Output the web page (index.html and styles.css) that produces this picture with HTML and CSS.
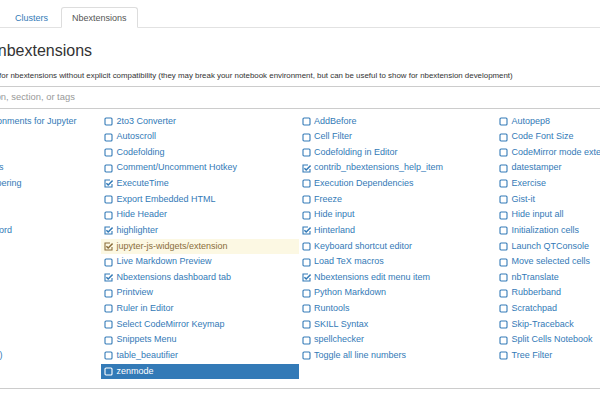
FILE: index.html
```html
<!DOCTYPE html>
<html>
<head>
<meta charset="utf-8">
<link rel="stylesheet" href="styles.css">
</head>
<body>
<div class="page">
  <ul class="tabs">
    <li class="tab"><a>Files</a></li>
    <li class="tab"><a>Running</a></li>
    <li class="tab"><a>Clusters</a></li>
    <li class="tab active"><a>Nbextensions</a></li>
  </ul>
  <h1 class="title">Configurable nbextensions</h1>
  <label class="compat"><input type="checkbox" class="compat-box">disable configuration for nbextensions without explicit compatibility (they may break your notebook environment, but can be useful to show for nbextension development)</label>
  <input class="filter" type="text" placeholder="filter: by description, section, or tags">
  <div class="list">
    <ul class="col">
      <li class="item"><svg class="ico" viewBox="0 0 9 9"><rect x="1" y="1" width="7" height="7" rx="1"/></svg><span>(some) LaTeX environments for Jupyter</span></li>
      <li class="item"><svg class="ico" viewBox="0 0 9 9"><rect x="1" y="1" width="7" height="7" rx="1"/></svg><span>Autosave time</span></li>
      <li class="item"><svg class="ico" viewBox="0 0 9 9"><rect x="1" y="1" width="7" height="7" rx="1"/></svg><span>Code prettify</span></li>
      <li class="item"><svg class="ico" viewBox="0 0 9 9"><rect x="1" y="1" width="7" height="7" rx="1"/></svg><span>Collapsible Headings</span></li>
      <li class="item"><svg class="ico" viewBox="0 0 9 9"><path d="M8 5V8H1V1H6"/><path class="chk" d="M2.4 4.2L4.2 6L8.6 1.6"/></svg><span>Equation Auto Numbering</span></li>
      <li class="item"><svg class="ico" viewBox="0 0 9 9"><rect x="1" y="1" width="7" height="7" rx="1"/></svg><span>Help panel</span></li>
      <li class="item"><svg class="ico" viewBox="0 0 9 9"><rect x="1" y="1" width="7" height="7" rx="1"/></svg><span>Hide CodeCell</span></li>
      <li class="item"><svg class="ico" viewBox="0 0 9 9"><rect x="1" y="1" width="7" height="7" rx="1"/></svg><span>Highlight selected word</span></li>
      <li class="item"><svg class="ico" viewBox="0 0 9 9"><rect x="1" y="1" width="7" height="7" rx="1"/></svg><span>Limit Output</span></li>
      <li class="item"><svg class="ico" viewBox="0 0 9 9"><rect x="1" y="1" width="7" height="7" rx="1"/></svg><span>Notify</span></li>
      <li class="item"><svg class="ico" viewBox="0 0 9 9"><rect x="1" y="1" width="7" height="7" rx="1"/></svg><span>Scroll Down</span></li>
      <li class="item"><svg class="ico" viewBox="0 0 9 9"><rect x="1" y="1" width="7" height="7" rx="1"/></svg><span>RISE</span></li>
      <li class="item"><svg class="ico" viewBox="0 0 9 9"><rect x="1" y="1" width="7" height="7" rx="1"/></svg><span>Snippets</span></li>
      <li class="item"><svg class="ico" viewBox="0 0 9 9"><rect x="1" y="1" width="7" height="7" rx="1"/></svg><span>Split Cells</span></li>
      <li class="item"><svg class="ico" viewBox="0 0 9 9"><rect x="1" y="1" width="7" height="7" rx="1"/></svg><span>Variable Inspector</span></li>
      <li class="item"><svg class="ico" viewBox="0 0 9 9"><rect x="1" y="1" width="7" height="7" rx="1"/></svg><span>Table of Contents (2)</span></li>
    </ul>
    <ul class="col">
      <li class="item"><svg class="ico" viewBox="0 0 9 9"><rect x="1" y="1" width="7" height="7" rx="1"/></svg><span>2to3 Converter</span></li>
      <li class="item"><svg class="ico" viewBox="0 0 9 9"><rect x="1" y="1" width="7" height="7" rx="1"/></svg><span>Autoscroll</span></li>
      <li class="item"><svg class="ico" viewBox="0 0 9 9"><rect x="1" y="1" width="7" height="7" rx="1"/></svg><span>Codefolding</span></li>
      <li class="item"><svg class="ico" viewBox="0 0 9 9"><rect x="1" y="1" width="7" height="7" rx="1"/></svg><span>Comment/Uncomment Hotkey</span></li>
      <li class="item"><svg class="ico" viewBox="0 0 9 9"><path d="M8 5V8H1V1H6"/><path class="chk" d="M2.4 4.2L4.2 6L8.6 1.6"/></svg><span>ExecuteTime</span></li>
      <li class="item"><svg class="ico" viewBox="0 0 9 9"><rect x="1" y="1" width="7" height="7" rx="1"/></svg><span>Export Embedded HTML</span></li>
      <li class="item"><svg class="ico" viewBox="0 0 9 9"><rect x="1" y="1" width="7" height="7" rx="1"/></svg><span>Hide Header</span></li>
      <li class="item"><svg class="ico" viewBox="0 0 9 9"><path d="M8 5V8H1V1H6"/><path class="chk" d="M2.4 4.2L4.2 6L8.6 1.6"/></svg><span>highlighter</span></li>
      <li class="item warn"><svg class="ico" viewBox="0 0 9 9"><path d="M8 5V8H1V1H6"/><path class="chk" d="M2.4 4.2L4.2 6L8.6 1.6"/></svg><span>jupyter-js-widgets/extension</span></li>
      <li class="item"><svg class="ico" viewBox="0 0 9 9"><rect x="1" y="1" width="7" height="7" rx="1"/></svg><span>Live Markdown Preview</span></li>
      <li class="item"><svg class="ico" viewBox="0 0 9 9"><path d="M8 5V8H1V1H6"/><path class="chk" d="M2.4 4.2L4.2 6L8.6 1.6"/></svg><span>Nbextensions dashboard tab</span></li>
      <li class="item"><svg class="ico" viewBox="0 0 9 9"><rect x="1" y="1" width="7" height="7" rx="1"/></svg><span>Printview</span></li>
      <li class="item"><svg class="ico" viewBox="0 0 9 9"><rect x="1" y="1" width="7" height="7" rx="1"/></svg><span>Ruler in Editor</span></li>
      <li class="item"><svg class="ico" viewBox="0 0 9 9"><rect x="1" y="1" width="7" height="7" rx="1"/></svg><span>Select CodeMirror Keymap</span></li>
      <li class="item"><svg class="ico" viewBox="0 0 9 9"><rect x="1" y="1" width="7" height="7" rx="1"/></svg><span>Snippets Menu</span></li>
      <li class="item"><svg class="ico" viewBox="0 0 9 9"><rect x="1" y="1" width="7" height="7" rx="1"/></svg><span>table_beautifier</span></li>
      <li class="item active"><svg class="ico" viewBox="0 0 9 9"><rect x="1" y="1" width="7" height="7" rx="1"/></svg><span>zenmode</span></li>
    </ul>
    <ul class="col">
      <li class="item"><svg class="ico" viewBox="0 0 9 9"><rect x="1" y="1" width="7" height="7" rx="1"/></svg><span>AddBefore</span></li>
      <li class="item"><svg class="ico" viewBox="0 0 9 9"><rect x="1" y="1" width="7" height="7" rx="1"/></svg><span>Cell Filter</span></li>
      <li class="item"><svg class="ico" viewBox="0 0 9 9"><rect x="1" y="1" width="7" height="7" rx="1"/></svg><span>Codefolding in Editor</span></li>
      <li class="item"><svg class="ico" viewBox="0 0 9 9"><path d="M8 5V8H1V1H6"/><path class="chk" d="M2.4 4.2L4.2 6L8.6 1.6"/></svg><span>contrib_nbextensions_help_item</span></li>
      <li class="item"><svg class="ico" viewBox="0 0 9 9"><rect x="1" y="1" width="7" height="7" rx="1"/></svg><span>Execution Dependencies</span></li>
      <li class="item"><svg class="ico" viewBox="0 0 9 9"><rect x="1" y="1" width="7" height="7" rx="1"/></svg><span>Freeze</span></li>
      <li class="item"><svg class="ico" viewBox="0 0 9 9"><rect x="1" y="1" width="7" height="7" rx="1"/></svg><span>Hide input</span></li>
      <li class="item"><svg class="ico" viewBox="0 0 9 9"><path d="M8 5V8H1V1H6"/><path class="chk" d="M2.4 4.2L4.2 6L8.6 1.6"/></svg><span>Hinterland</span></li>
      <li class="item"><svg class="ico" viewBox="0 0 9 9"><rect x="1" y="1" width="7" height="7" rx="1"/></svg><span>Keyboard shortcut editor</span></li>
      <li class="item"><svg class="ico" viewBox="0 0 9 9"><rect x="1" y="1" width="7" height="7" rx="1"/></svg><span>Load TeX macros</span></li>
      <li class="item"><svg class="ico" viewBox="0 0 9 9"><path d="M8 5V8H1V1H6"/><path class="chk" d="M2.4 4.2L4.2 6L8.6 1.6"/></svg><span>Nbextensions edit menu item</span></li>
      <li class="item"><svg class="ico" viewBox="0 0 9 9"><rect x="1" y="1" width="7" height="7" rx="1"/></svg><span>Python Markdown</span></li>
      <li class="item"><svg class="ico" viewBox="0 0 9 9"><rect x="1" y="1" width="7" height="7" rx="1"/></svg><span>Runtools</span></li>
      <li class="item"><svg class="ico" viewBox="0 0 9 9"><rect x="1" y="1" width="7" height="7" rx="1"/></svg><span>SKILL Syntax</span></li>
      <li class="item"><svg class="ico" viewBox="0 0 9 9"><rect x="1" y="1" width="7" height="7" rx="1"/></svg><span>spellchecker</span></li>
      <li class="item"><svg class="ico" viewBox="0 0 9 9"><rect x="1" y="1" width="7" height="7" rx="1"/></svg><span>Toggle all line numbers</span></li>
    </ul>
    <ul class="col">
      <li class="item"><svg class="ico" viewBox="0 0 9 9"><rect x="1" y="1" width="7" height="7" rx="1"/></svg><span>Autopep8</span></li>
      <li class="item"><svg class="ico" viewBox="0 0 9 9"><rect x="1" y="1" width="7" height="7" rx="1"/></svg><span>Code Font Size</span></li>
      <li class="item"><svg class="ico" viewBox="0 0 9 9"><rect x="1" y="1" width="7" height="7" rx="1"/></svg><span>CodeMirror mode extensions</span></li>
      <li class="item"><svg class="ico" viewBox="0 0 9 9"><rect x="1" y="1" width="7" height="7" rx="1"/></svg><span>datestamper</span></li>
      <li class="item"><svg class="ico" viewBox="0 0 9 9"><rect x="1" y="1" width="7" height="7" rx="1"/></svg><span>Exercise</span></li>
      <li class="item"><svg class="ico" viewBox="0 0 9 9"><rect x="1" y="1" width="7" height="7" rx="1"/></svg><span>Gist-it</span></li>
      <li class="item"><svg class="ico" viewBox="0 0 9 9"><rect x="1" y="1" width="7" height="7" rx="1"/></svg><span>Hide input all</span></li>
      <li class="item"><svg class="ico" viewBox="0 0 9 9"><rect x="1" y="1" width="7" height="7" rx="1"/></svg><span>Initialization cells</span></li>
      <li class="item"><svg class="ico" viewBox="0 0 9 9"><rect x="1" y="1" width="7" height="7" rx="1"/></svg><span>Launch QTConsole</span></li>
      <li class="item"><svg class="ico" viewBox="0 0 9 9"><rect x="1" y="1" width="7" height="7" rx="1"/></svg><span>Move selected cells</span></li>
      <li class="item"><svg class="ico" viewBox="0 0 9 9"><rect x="1" y="1" width="7" height="7" rx="1"/></svg><span>nbTranslate</span></li>
      <li class="item"><svg class="ico" viewBox="0 0 9 9"><rect x="1" y="1" width="7" height="7" rx="1"/></svg><span>Rubberband</span></li>
      <li class="item"><svg class="ico" viewBox="0 0 9 9"><rect x="1" y="1" width="7" height="7" rx="1"/></svg><span>Scratchpad</span></li>
      <li class="item"><svg class="ico" viewBox="0 0 9 9"><rect x="1" y="1" width="7" height="7" rx="1"/></svg><span>Skip-Traceback</span></li>
      <li class="item"><svg class="ico" viewBox="0 0 9 9"><rect x="1" y="1" width="7" height="7" rx="1"/></svg><span>Split Cells Notebook</span></li>
      <li class="item"><svg class="ico" viewBox="0 0 9 9"><rect x="1" y="1" width="7" height="7" rx="1"/></svg><span>Tree Filter</span></li>
    </ul>
  </div>
</div>
</body>
</html>
```
FILE: styles.css
```css
html, body {
  margin: 0;
  padding: 0;
  overflow: hidden;
  background: #fff;
}
body {
  font-family: "Liberation Sans", Arial, sans-serif;
  font-size: 9px;
  color: #333;
}
.page {
  margin-left: -110px;
  width: 900px;
}
.tabs {
  list-style: none;
  margin: 0;
  padding: 7px 0 0 13.5px;
  display: flex;
  border-bottom: 1px solid #e2e2e2;
}
.tab {
  margin: 0 2px -1px 0;
  padding: 3.5px 10px;
  line-height: 12px;
  border: 1px solid transparent;
  border-radius: 3px 3px 0 0;
  color: #337ab7;
}
.tab.active {
  color: #555;
  background: #fff;
  border-color: #ddd #ddd transparent;
}
.title {
  margin: 13px 0 0 12.6px;
  font-size: 16px;
  line-height: 19px;
  font-weight: normal;
  color: #333;
}
.compat {
  display: flex;
  align-items: center;
  gap: 4px;
  margin: 8.7px 0 0 21.5px;
  font-size: 7.9px;
  line-height: 13px;
  white-space: nowrap;
}
.compat-box {
  margin: 0;
  width: 9px;
  height: 9px;
}
.filter {
  display: block;
  box-sizing: border-box;
  margin: 4.3px 0 0 26.3px;
  width: 800px;
  height: 23px;
  padding: 0 8px 2px;
  border: 1px solid #ccc;
  border-radius: 0;
  font-family: "Liberation Sans", Arial, sans-serif;
  font-size: 9.4px;
  line-height: 19px;
  color: #555;
  outline: none;
}
.filter::placeholder {
  color: #999;
}
.list {
  display: flex;
  margin: 4.6px 0 0 0;
  padding: 0 0 9px 13.5px;
  border-bottom: 1px solid #ccc;
}
.col {
  list-style: none;
  margin: 0;
  padding: 0;
  width: 197.5px;
  flex: none;
}
.item {
  display: flex;
  align-items: center;
  gap: 3.5px;
  height: 15.625px;
  padding-left: 3px;
  line-height: 15.625px;
  color: #337ab7;
  white-space: nowrap;
}
.ico {
  width: 9px;
  height: 9px;
  flex: none;
  fill: none;
  stroke: currentColor;
  stroke-width: 1.1;
}
.ico .chk {
  stroke-width: 1.5;
}
.item.warn {
  background: #fcf8e3;
  color: #8a6d3b;
}
.item.active {
  background: #337ab7;
  color: #fff;
}
```
